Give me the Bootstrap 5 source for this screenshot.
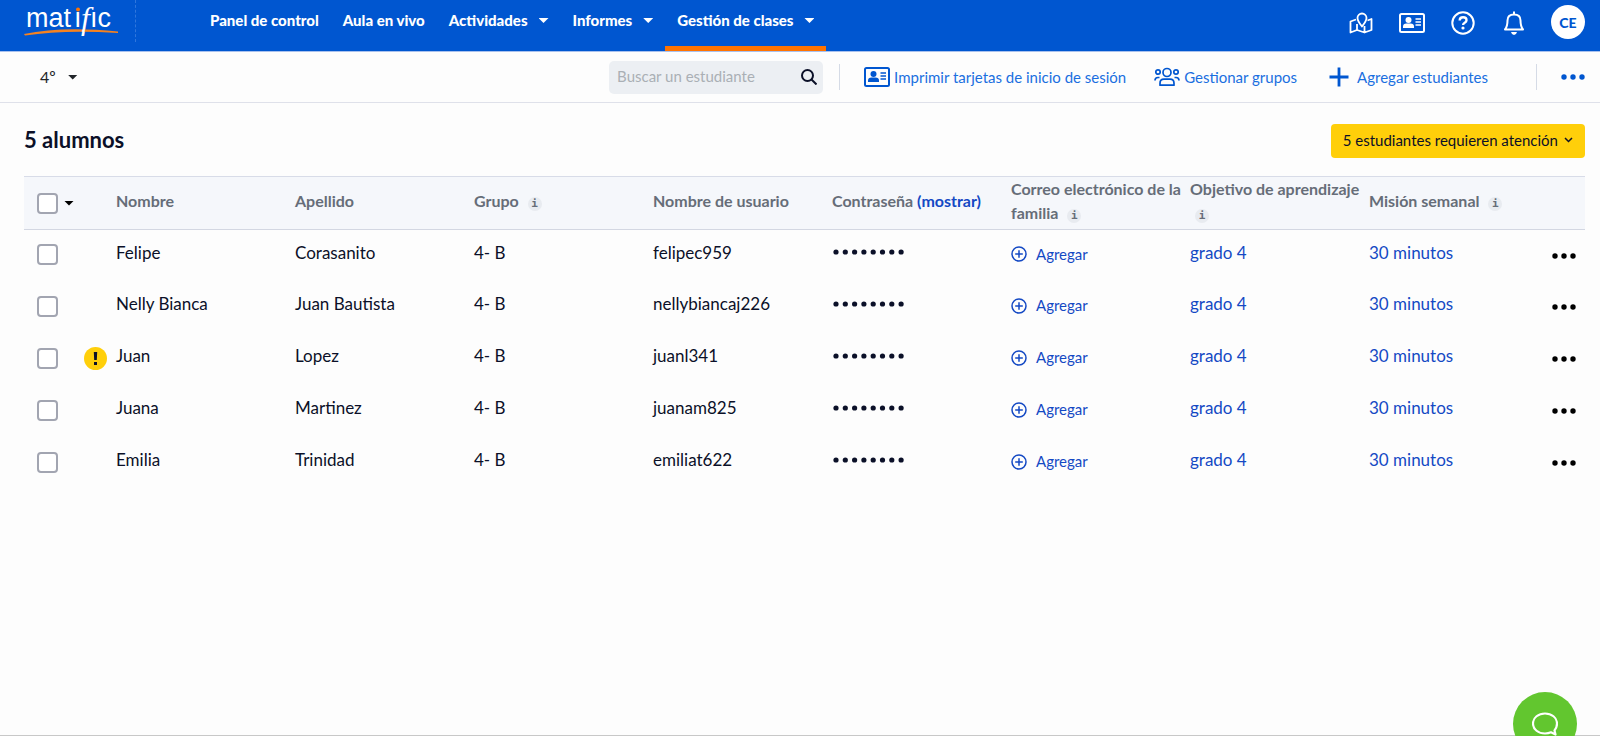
<!DOCTYPE html>
<html lang="es">
<head>
<meta charset="utf-8">
<meta name="viewport" content="width=device-width, initial-scale=1">
<title>Gestión de clases - Matific</title>
<link href="https://cdn.jsdelivr.net/npm/bootstrap@5.3.0/dist/css/bootstrap.min.css" rel="stylesheet">
<style>
  :root { --mt-blue: #0056d0; --mt-link: #1a6fe0; --mt-ink: #0b1028; }
  body { font-family: Lato, "Open Sans", sans-serif; font-size: 16px; color: var(--mt-ink); background: #fdfdfd; min-height: 100vh; border-bottom: 1px solid #c8c8c8; }
  a { text-decoration: none; }
  svg { display: block; flex: none; }
  button { color: inherit; }

  .topbar { background: var(--mt-blue); height: 52px; border-bottom: 1px solid #a9c1ee; padding: 0 15px 0 24px; }
  .brand-cell { width: 112px; height: 42px; border-right: 1px dashed #2f76dc; padding-top: 5px; }
  .brand-cell svg { overflow: visible; }
  .topbar .nav-link { color: #fff; font-weight: 900; font-size: 15px; line-height: 20px; height: 51px; padding: 10px 12px 0; }
  .topbar .nav-link.active { border-bottom: 5px solid #ff7300; }
  .topbar .caret { margin: 8px 0 0 11px; }
  .main-nav { margin-left: 62px; }
  .caret { width: 10px; height: 5px; background: currentColor; clip-path: polygon(0 0, 100% 0, 50% 100%); }
  .icon-btn { border: 0; background: none; padding: 0; width: 51px; height: 46px; color: #fff; }
  .avatar { width: 34px; height: 34px; border-radius: 50%; border: 0; background: #fff; color: var(--mt-blue); font-weight: 900; font-size: 14px; margin: 5px 0 0 12px; }

  .toolbar { height: 51px; border-bottom: 1px solid #dfe1ea; padding: 0 15px 0 40px; }
  .toolbar a { color: var(--mt-link); font-size: 15px; }
  .toolbar svg { color: var(--mt-blue); }
  .class-btn { gap: 12px; }
  .search-box { width: 214px; height: 33px; background: #eceff3; border-radius: 5px; padding: 0 6px 0 8px; }
  .search-box input { border: 0; background: none; outline: 0; width: 100%; min-width: 0; padding: 0 0 2px; font-size: 15px; color: var(--mt-ink); }
  .search-box input::placeholder { color: #aaafb5; opacity: 1; }
  .v-rule { width: 1px; height: 26px; background: #d5dbe6; }

  .page-area { padding: 21px 15px 0 24px; }
  .page-area h1 { font-size: 22px; font-weight: 700; line-height: 32px; }
  .alert-btn { background: #ffcf0a; border: 0; border-radius: 4px; height: 34px; padding: 0 12px 2px; font-size: 15px; gap: 6px; }

  .students { table-layout: fixed; width: 100%; margin-top: 18px; }
  .students thead th { background: #f5f7fb; color: #666d78; font-size: 16px; font-weight: 700; line-height: 25px; height: 53px; padding: 0; vertical-align: middle; border-top: 1px solid #d8dce8; border-bottom: 1px solid #d3d7e2; }
  .students thead th:not(:first-child) { line-height: 24px; padding-bottom: 4px; }
  .students tbody td { height: 52px; padding: 0 0 7px; vertical-align: middle; font-size: 17px; }
  .students a { color: #1449c4; }
  .col-select { width: 92px; }
  .col-menu { width: 37px; }
  .students .form-check-input { width: 21px; height: 21px; margin: 0; border: 2px solid #a2a5b1; border-radius: 4px; background-color: #fff; box-shadow: none; flex: none; }
  .select-cell { padding-left: 13px; }
  .students tbody .select-cell { padding-top: 4px; }
  .select-cell .caret { margin-left: 6px; }
  .warn { width: 23px; height: 23px; margin-left: 26px; }
  .info { display: inline-block; width: 14px; height: 14px; border: 0; border-radius: 50%; padding: 0; margin-left: 5px; background: #e8ebf0; color: #666d78; font: 700 11px/14px "DejaVu Sans Mono", monospace; text-align: center; }
  .students .add-link { font-size: 15px; padding-top: 3px; gap: 9px; }
  .dots { border: 0; background: none; padding: 4px 0 0 4px; }

  .chat { position: fixed; right: 23px; bottom: -20px; width: 64px; height: 64px; border: 0; border-radius: 50%; background: #62c62f; padding: 0; }
</style>
</head>
<body>
<svg class="d-none" aria-hidden="true">
  <symbol id="i-card" viewBox="0 0 26 20">
    <rect x="1" y="1" width="24" height="18" rx="1.5" fill="none" stroke="currentColor" stroke-width="2"/>
    <circle cx="9.500" cy="7" r="3" fill="currentColor"/><path d="M4 15v-1.500q0-3 3.500-3h4q3.500 0 3.500 3V15z" fill="currentColor"/>
    <path d="M16.500 6h5.500M16.500 9h5.500M16.500 12h5.500" stroke="currentColor" stroke-width="1.500"/>
  </symbol>
  <symbol id="i-more" viewBox="0 0 24 6"><circle cx="3" cy="3" r="2.700"/><circle cx="12" cy="3" r="2.700"/><circle cx="21" cy="3" r="2.700"/></symbol>
  <symbol id="i-plus" viewBox="0 0 16 16" fill="none" stroke="currentColor" stroke-width="1.500"><circle cx="8" cy="8" r="7"/><path d="M8 4.200v7.600M4.200 8h7.600"/></symbol>
</svg>

<header class="topbar d-flex align-items-start">
  <div class="brand-cell">
    <a href="#" aria-label="matific">
      <svg width="96" height="34" viewBox="0 0 96 34">
        <path d="M0 29Q38 21 94 26.500V28Q40 24.500 1 30.500z" fill="#f58220"/>
        <g fill="#fff" font-family="Liberation Sans, Arial, sans-serif" font-size="27">
          <text x="2" y="22">mat</text><text x="50" y="22">ı</text><text x="66" y="22">ıc</text>
          <text x="57" y="24" font-family="Liberation Serif, serif" font-style="italic" font-size="32">f</text>
        </g>
        <circle cx="54" cy="4.500" r="2" fill="#ff7300"/>
      </svg>
    </a>
  </div>
  <nav class="main-nav d-flex" aria-label="Principal">
    <a class="nav-link" href="#">Panel de control</a>
    <a class="nav-link" href="#">Aula en vivo</a>
    <a class="nav-link d-flex" href="#">Actividades<span class="caret"></span></a>
    <a class="nav-link d-flex" href="#">Informes<span class="caret"></span></a>
    <a class="nav-link d-flex active" href="#" aria-current="page">Gestión de clases<span class="caret"></span></a>
  </nav>
  <div class="d-flex ms-auto">
    <button class="icon-btn d-flex align-items-center justify-content-center" aria-label="Mapa">
      <svg width="24" height="22" viewBox="0 0 24 22" fill="none" stroke="currentColor" stroke-width="1.800" stroke-linejoin="round"><path d="M7 7.500L1.500 9.500V20.500L8 18l7.500 2.500 7-2.500V7l-4 1.500M8 12v6M15.500 14v6.500"/><path d="M13 14.500Q8.500 9 8.500 6a4.500 4.500 0 0 1 9 0q0 3-4.500 8.500z"/></svg>
    </button>
    <button class="icon-btn d-flex align-items-center justify-content-center" aria-label="Tarjetas"><svg width="26" height="20"><use href="#i-card"/></svg></button>
    <button class="icon-btn d-flex align-items-center justify-content-center" aria-label="Ayuda">
      <svg width="24" height="24" viewBox="0 0 24 24" fill="none" stroke="currentColor"><circle cx="12" cy="12" r="10.700" stroke-width="2"/><path d="M8.700 9.500q0-3.200 3.400-3.200t3.400 2.900q0 1.500-1.800 2.500-1.600.900-1.600 2.300" stroke-width="2.400"/><circle cx="12" cy="17" r="1.600" fill="currentColor" stroke="none"/></svg>
    </button>
    <button class="icon-btn d-flex align-items-center justify-content-center" aria-label="Notificaciones">
      <svg width="22" height="24" viewBox="0 0 22 24" fill="none" stroke="currentColor" stroke-width="2" stroke-linejoin="round"><path d="M11 .500V3M2 18.500q2.500-3 2.500-9Q4.500 3.500 11 3.500t6.500 6q0 6 2.500 9z"/><path d="M8 21h6q-.800 3-3 3t-3-3z" fill="currentColor" stroke="none"/></svg>
    </button>
    <button class="avatar">CE</button>
  </div>
</header>

<div class="toolbar d-flex align-items-center">
  <button class="class-btn btn p-0 border-0 d-flex align-items-center">4º<span class="caret"></span></button>
  <div class="search-box d-flex align-items-center ms-auto">
    <input type="search" placeholder="Buscar un estudiante" aria-label="Buscar un estudiante">
    <svg width="16" height="16" viewBox="0 0 16 16" fill="none" stroke="#0b1028" stroke-width="2"><circle cx="6.500" cy="6.500" r="5.500"/><path d="M10.500 10.500l5 5"/></svg>
  </div>
  <span class="v-rule ms-3 me-4"></span>
  <a href="#" class="d-flex align-items-center gap-1"><svg width="26" height="20"><use href="#i-card"/></svg>Imprimir tarjetas de inicio de sesión</a>
  <a href="#" class="d-flex align-items-center gap-1 ms-4 ps-1">
    <svg width="26" height="20" viewBox="0 0 26 20" fill="none" stroke="currentColor" stroke-width="1.700"><circle cx="13" cy="5.500" r="4"/><path d="M6 18.200v-2q0-4 4-4h6q4 0 4 4v2z" stroke-linejoin="round"/><circle cx="4" cy="5" r="2.200"/><circle cx="22" cy="5" r="2.200"/><path d="M1 13.500q0-3 3-3h1.500M25 13.500q0-3-3-3h-1.500"/></svg>Gestionar grupos</a>
  <a href="#" class="d-flex align-items-center gap-2 ms-4 ps-2"><svg width="20" height="20" viewBox="0 0 20 20" stroke="currentColor" stroke-width="2.800"><path d="M10 .500v19M.500 10h19"/></svg>Agregar estudiantes</a>
  <span class="v-rule ms-5 me-4"></span>
  <button class="btn p-0 border-0" aria-label="Más opciones"><svg width="24" height="6" fill="#0056d0"><use href="#i-more"/></svg></button>
</div>

<main class="page-area">
  <div class="d-flex justify-content-between">
    <h1 class="m-0">5 alumnos</h1>
    <button class="alert-btn d-flex align-items-center">5 estudiantes requieren atención
      <svg width="9" height="6" viewBox="0 0 9 6" fill="none" stroke="currentColor" stroke-width="1.500"><path d="M1 1l3.500 3.500L8 1"/></svg></button>
  </div>

  <table class="students">
    <colgroup><col class="col-select"><col span="8"><col class="col-menu"></colgroup>
    <thead>
      <tr>
        <th><div class="select-cell d-flex align-items-center"><input class="form-check-input" type="checkbox" aria-label="Seleccionar todos"><span class="caret text-black"></span></div></th>
        <th>Nombre</th>
        <th>Apellido</th>
        <th>Grupo <button class="info" aria-label="Información">i</button></th>
        <th>Nombre de usuario</th>
        <th>Contraseña <a href="#">(mostrar)</a></th>
        <th>Correo electrónico de la <span>familia</span> <button class="info" aria-label="Información">i</button></th>
        <th>Objetivo de aprendizaje <button class="info" aria-label="Información">i</button></th>
        <th>Misión semanal <button class="info" aria-label="Información">i</button></th>
        <th></th>
      </tr>
    </thead>
    <tbody id="rows"></tbody>
  </table>
</main>

<button class="chat" aria-label="Chat">
  <svg class="mx-auto" width="26" height="24" viewBox="0 0 26 24" fill="none" stroke="#fff" stroke-width="2.200" stroke-linejoin="round"><path d="M22.500 18.500Q25 15.500 25 11.500C25 5.500 19.500 1.500 13 1.500S1 5.500 1 11.500s5.500 10 12 10q3.500 0 6-1.200l4.500 2.200z"/></svg>
</button>

<script>
  const students = [
    ["Felipe", "Corasanito", "felipec959"],
    ["Nelly Bianca", "Juan Bautista", "nellybiancaj226"],
    ["Juan", "Lopez", "juanl341", true],
    ["Juana", "Martinez", "juanam825"],
    ["Emilia", "Trinidad", "emiliat622"]
  ];
  const warning = '<svg class="warn" viewBox="0 0 23 23"><circle cx="11.500" cy="11.500" r="11.500" fill="#ffcf0a"/><path d="M9.800 5h3.400l-.400 8h-2.600zM10 15h3v3h-3z" fill="#0b1028"/></svg>';
  document.getElementById("rows").innerHTML = students.map(([name, last, user, warn]) => `
    <tr>
      <td><div class="select-cell d-flex align-items-center"><input class="form-check-input" type="checkbox" aria-label="Seleccionar a ${name}">${warn ? warning : ""}</div></td>
      <td>${name}</td><td>${last}</td><td>4- B</td><td>${user}</td>
      <td><svg width="74" height="6" role="img" aria-label="Contraseña oculta">${[...Array(8).keys()].map(i => `<circle cx="${4 + i * 9.3}" cy="3" r="2.600" fill="#0b1028"/>`).join("")}</svg></td>
      <td><a href="#" class="add-link d-flex align-items-center"><svg width="16" height="16"><use href="#i-plus"/></svg>Agregar</a></td>
      <td><a href="#">grado 4</a></td><td><a href="#">30 minutos</a></td>
      <td><button class="dots" aria-label="Acciones"><svg width="24" height="6" fill="#000"><use href="#i-more"/></svg></button></td>
    </tr>`).join("");
</script>
<script src="https://cdn.jsdelivr.net/npm/bootstrap@5.3.0/dist/js/bootstrap.bundle.min.js"></script>
</body>
</html>
